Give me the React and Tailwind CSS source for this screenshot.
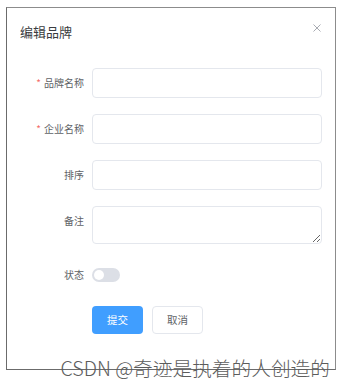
import React from 'react'

const font = { fontFamily: '"Noto Sans CJK SC", "Noto Sans", sans-serif' }

const Field = ({ label, required, children, center = true }) => (
  <div className={`flex ${center ? 'items-center' : 'items-start'}`}>
    <div className="w-[77px] text-right text-[10px] leading-[30px] text-[#606266] shrink-0">
      {required && <span className="text-[#f56c6c] mr-[3px]">*</span>}
      {label}
    </div>
    <div className="ml-2">{children}</div>
  </div>
)

const App = () => {
  return (
    <div className="relative w-[344px] h-[389px] bg-white overflow-hidden" style={font}>
      <div className="absolute left-[6px] top-[7px] w-[330px] h-[363px] border border-[#8c8c8c] border-l-[#6b6b6b] border-b-[#6b6b6b] bg-white">
        {/* Header */}
        <div className="h-[48px] flex items-center justify-between pl-[13px] pr-[14px]">
          <span className="text-[13px] text-[#3a3c40]">编辑品牌</span>
          <svg width="8" height="8" viewBox="0 0 8 8" className="-mt-[8px]">
            <path d="M0.5 0.5 L7.5 7.5 M7.5 0.5 L0.5 7.5" stroke="#a8abb2" strokeWidth="1" />
          </svg>
        </div>

        {/* Form */}
        <div className="pt-[12px] flex flex-col gap-4">
          <Field label="品牌名称" required>
            <input className="w-[230px] h-[30px] border border-[#e4e7ed] rounded-[4px] outline-none" />
          </Field>
          <Field label="企业名称" required>
            <input className="w-[230px] h-[30px] border border-[#e4e7ed] rounded-[4px] outline-none" />
          </Field>
          <Field label="排序">
            <input className="w-[230px] h-[30px] border border-[#e4e7ed] rounded-[4px] outline-none" />
          </Field>
          <Field label="备注" center={false}>
            <textarea className="block w-[230px] h-[38px] border border-[#e4e7ed] rounded-[4px] outline-none" />
          </Field>
          <Field label="状态">
            <div className="w-[28px] h-[14px] rounded-full bg-[#dcdfe6] flex items-center pl-[2px]">
              <div className="w-[10px] h-[10px] rounded-full bg-white" />
            </div>
          </Field>
          <div className="flex pl-[85px] gap-[9px]">
            <button className="w-[51px] h-[28px] rounded-[4px] bg-[#409eff] text-white text-[10.5px]">提交</button>
            <button className="w-[51px] h-[28px] rounded-[4px] border border-[#e4e7ed] bg-white text-[#606266] text-[10.5px]">取消</button>
          </div>
        </div>
      </div>

      {/* Watermark */}
      <div className="absolute right-[14px] top-[357px] text-[19.7px] leading-[22px] font-light text-[#5c5c5c] whitespace-nowrap">
        CSDN @奇迹是执着的人创造的
      </div>
    </div>
  )
}

export default App
